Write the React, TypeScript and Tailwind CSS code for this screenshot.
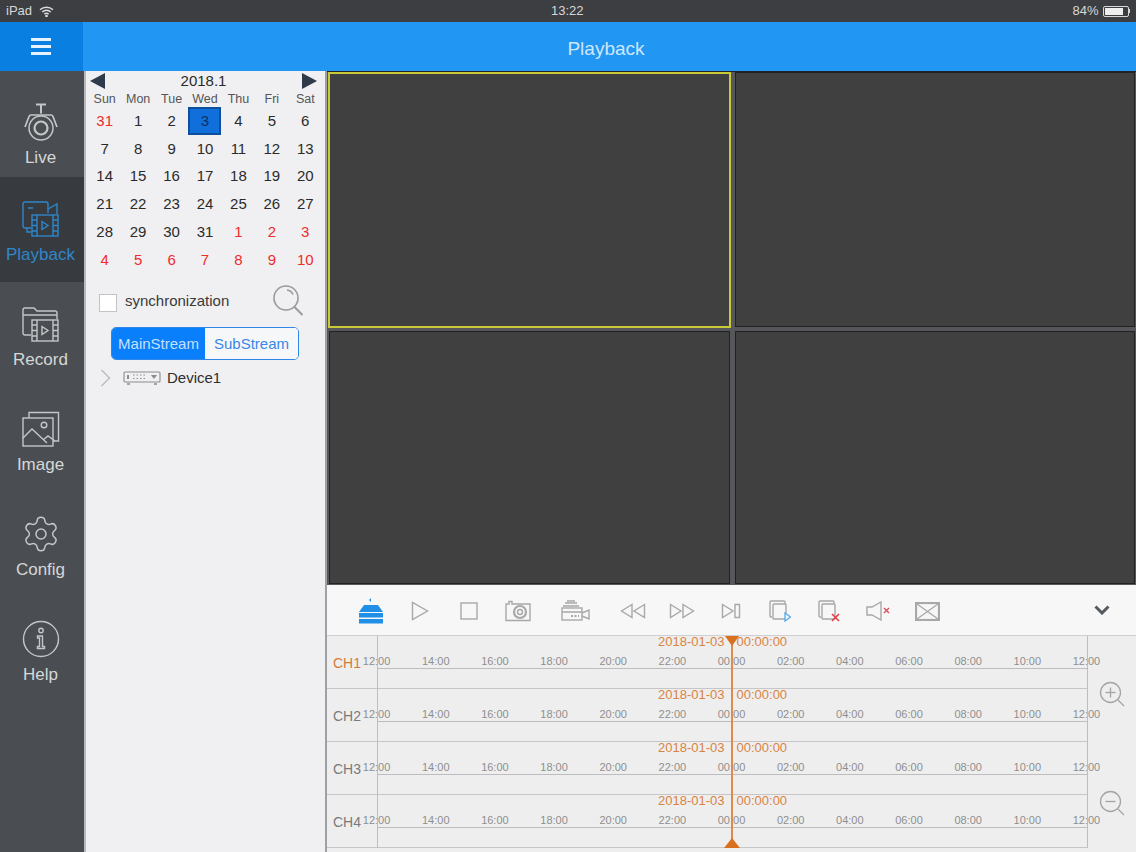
import type { ReactNode } from "react";
import { Settings } from "lucide-react";

const FONT = "font-['Liberation_Sans',Arial,sans-serif]";

// ---- left menu icons ----
function LiveIcon() {
  return (
    <svg width="38" height="38" viewBox="0 0 38 38" fill="none" stroke="#c4c6c8" strokeWidth="1.5">
      <path d="M14 1.500h10M19 1.500v9" strokeWidth="2" />
      <path d="M3 24L7 13.500c.4-1 1.200-1.500 2-1.500h20c.8 0 1.600.5 2 1.500L35 24" strokeWidth="1.700" />
      <circle cx="19" cy="25" r="12" />
      <circle cx="19" cy="25" r="6.500" strokeWidth="2.200" />
    </svg>
  );
}

function PlaybackIcon({ stroke = "#2f86c9", folder = false }: { stroke?: string; folder?: boolean }) {
  return (
    <svg width="38" height="36" viewBox="0 0 38 36" fill="none" stroke={stroke} strokeWidth="1.4">
      {folder ? (
        <path d="M9 29H3a2 2 0 0 1-2-2V4a2 2 0 0 1 2-2h9l3 3h18a2 2 0 0 1 2 2v6M1 9h34" />
      ) : (
        <>
          <path d="M9 27H3a2 2 0 0 1-2-2V3a2 2 0 0 1 2-2h21a2 2 0 0 1 2 2v9" />
          <path d="M26 8l9-5v10" />
          <path d="M6 7h5M5 27v4h4" />
        </>
      )}
      <rect x="10" y="14" width="26" height="21" fill="none" />
      <path d="M15 14v21M31 14v21M10 19h5M10 24.500h5M10 30h5M31 19h5M31 24.500h5M31 30h5" />
      <path d="M20 20.500l6 4-6 4z" />
    </svg>
  );
}

function ImageIcon() {
  return (
    <svg width="38" height="36" viewBox="0 0 38 36" fill="none" stroke="#c4c6c8" strokeWidth="1.4">
      <path d="M7 7V1.500h29.500V30H31" />
      <rect x="1" y="7" width="30" height="28" />
      <circle cx="22" cy="14" r="2.800" />
      <path d="M1 27l9-9 15 14M21 29l5-4 7 5" />
    </svg>
  );
}

function HelpIcon() {
  return (
    <svg width="38" height="38" viewBox="0 0 38 38" fill="none" stroke="#c4c6c8" strokeWidth="1.4">
      <circle cx="19" cy="19" r="17.500" />
      <circle cx="19" cy="10.500" r="2.200" />
      <path d="M15.500 16h5v10.500h2v2h-7v-2h2V18h-2z" />
    </svg>
  );
}

function NavItem({ icon, label, active, first }: { icon: ReactNode; label: string; active?: boolean; first?: boolean }) {
  return (
    <div className={`h-[105px] flex flex-col items-center pr-[3px] ${first ? "pt-[31px]" : "pt-[23px]"} ${active ? "bg-[#373b40]" : ""}`}>
      <div className="h-[38px] flex items-center justify-center">{icon}</div>
      <div className={`text-[17px] leading-[20px] mt-[7px] ${active ? "text-[#2f86c9]" : "text-[#d6d7d8]"}`}>{label}</div>
    </div>
  );
}

// ---- calendar ----
const WEEK = ["Sun", "Mon", "Tue", "Wed", "Thu", "Fri", "Sat"];
const DAYS: { d: number; red?: boolean; sel?: boolean }[] = [
  { d: 31, red: true },
  ...Array.from({ length: 31 }, (_, i) => ({ d: i + 1, sel: i === 2 })),
  ...Array.from({ length: 10 }, (_, i) => ({ d: i + 1, red: true })),
];

function Calendar() {
  return (
    <div className="ml-[2px] w-[234px]">
      <div className="h-[19px] pt-[1px] flex items-center justify-between pl-[2px] pr-[5px]">
        <div className="w-0 h-0 border-y-[8px] border-y-transparent border-r-[15px] border-r-[#2f3a4a]" />
        <div className="text-[15px] leading-[18px] text-[#2b2b2b]">2018.1</div>
        <div className="w-0 h-0 border-y-[8px] border-y-transparent border-l-[15px] border-l-[#2f3a4a]" />
      </div>
      <div className="grid grid-cols-7 h-[17px] items-center">
        {WEEK.map((w) => (
          <div key={w} className="text-center text-[12.5px] leading-[16px] text-[#555]">{w}</div>
        ))}
      </div>
      <div className="grid grid-cols-7 auto-rows-[27.9px]">
        {DAYS.map((c, i) => (
          <div key={i} className="flex items-center justify-center">
            <div
              className={`w-[33px] h-[27.800px] flex items-center justify-center text-[15px] ${
                c.sel
                  ? "bg-[#106fdb] border-2 border-[#0d4f9c] text-[#0b2f63]"
                  : c.red
                    ? "text-[#ee2c2c]"
                    : "text-[#2b2b2b]"
              }`}
            >
              {c.d}
            </div>
          </div>
        ))}
      </div>
    </div>
  );
}

function SearchIcon() {
  return (
    <svg width="32" height="32" viewBox="0 0 32 32" fill="none" stroke="#9a9a9a" strokeWidth="1.6">
      <circle cx="14" cy="13" r="12" />
      <path d="M22.500 22l8 8" strokeWidth="2" />
      <path d="M15 5c3 .3 5 2 6 4.500" />
    </svg>
  );
}

function DeviceIcon() {
  return (
    <svg width="38" height="15" viewBox="0 0 38 15" fill="none" stroke="#8c8c8c" strokeWidth="1.1">
      <rect x="1" y="1" width="36" height="10" rx="1" />
      <path d="M4 13h3M31 13h3" strokeWidth="1.6" />
      <path d="M5 4v4" strokeWidth="2" />
      <path d="M10 4h14M10 7.500h14" strokeDasharray="1.500 2" />
      <path d="M29 4.500h4l-2 2.500z" fill="#8c8c8c" />
    </svg>
  );
}

function SidePanel() {
  return (
    <div className="w-[243px] h-full shrink-0 bg-[#f0f0f2] border-l-2 border-r-2 border-l-[#b9babc] border-r-[#9fa0a2]">
      <Calendar />
      <div className="mt-[11px] h-[32px] flex items-center pl-[13px]">
        <div className="w-[18px] h-[18px] bg-white border border-[#c4c4c4] mt-[3px]" />
        <div className="ml-[8px] text-[15px] text-[#3a3a3a]">synchronization</div>
        <div className="ml-[43px]"><SearchIcon /></div>
      </div>
      <div className="mt-[10px] ml-[25px] w-[188px] h-[33px] flex rounded-[5px] border border-[#2f86e6] overflow-hidden text-[15px]">
        <div className="w-[93px] bg-[#0a7ffb] text-[#c4e0ff] flex items-center justify-center">MainStream</div>
        <div className="flex-1 bg-[#f6f7f9] text-[#3b87e6] flex items-center justify-center">SubStream</div>
      </div>
      <div className="mt-[8px] h-[20px] flex items-center pl-[14px]">
        <svg width="11" height="18" viewBox="0 0 11 18" fill="none" stroke="#bdbdbd" strokeWidth="1.500">
          <path d="M1.500 1l8 8-8 8" />
        </svg>
        <div className="ml-[12px]"><DeviceIcon /></div>
        <div className="ml-[6px] text-[15px] text-[#2f2f2f]">Device1</div>
      </div>
    </div>
  );
}

// ---- toolbar ----
const S = { fill: "none", stroke: "#a8a8a8", strokeWidth: 1.4 };

function CopyShape() {
  return (
    <>
      <path d="M3 17H2a1 1 0 0 1-1-1V2a1 1 0 0 1 1-1h13a1 1 0 0 1 1 1v2" />
      <rect x="4" y="4" width="13" height="15" rx="1" />
    </>
  );
}

const TOOLS: { w: string; icon: ReactNode }[] = [
  {
    w: "w-[49px]",
    icon: (
      <svg width="26" height="28" viewBox="0 0 26 28">
        <path d="M13 1l-2 2 2 2z" fill="#2b8fe6" />
        <path d="M6 8h14l5 7H1z" fill="#1f8fe8" />
        <rect x="1" y="16" width="24" height="4.500" fill="#1f8fe8" />
        <rect x="1" y="22" width="24" height="4.500" fill="#1f8fe8" />
      </svg>
    ),
  },
  { w: "w-[49px]", icon: <svg width="18" height="20" viewBox="0 0 18 20" {...S}><path d="M1.500 1.500v17l15-8.500z" /></svg> },
  { w: "w-[49px]", icon: <svg width="18" height="18" viewBox="0 0 18 18" {...S}><rect x="1" y="1" width="16" height="16" /></svg> },
  {
    w: "w-[49px]",
    icon: (
      <svg width="26" height="24" viewBox="0 0 26 24" {...S}>
        <path d="M1 21V5h3V2.500h3V5h18v16.500H1z" />
        <circle cx="15" cy="13" r="6" strokeWidth="2.200" />
        <circle cx="15" cy="13" r="2.500" />
      </svg>
    ),
  },
  {
    w: "w-[66px]",
    icon: (
      <svg width="29" height="22" viewBox="0 0 29 22" {...S}>
        <path d="M2 6h16M4 3h12M6 1h8" />
        <rect x="1" y="8" width="20" height="12" />
        <path d="M1 12h20M21 13l7-3v9l-7-3" />
        <path d="M10 16h8" strokeDasharray="2 1.500" strokeWidth="2" />
      </svg>
    ),
  },
  { w: "w-[49px]", icon: <svg width="26" height="16" viewBox="0 0 26 16" {...S}><path d="M12 1.500L1.500 8 12 14.500zM24.500 1.500L14 8l10.500 6.500z" /></svg> },
  { w: "w-[49px]", icon: <svg width="26" height="16" viewBox="0 0 26 16" {...S}><path d="M1.500 1.500L12 8 1.500 14.500zM14 1.500L24.500 8 14 14.500z" /></svg> },
  { w: "w-[49px]", icon: <svg width="20" height="16" viewBox="0 0 20 16" {...S}><path d="M1.500 1.500L12 8 1.500 14.500zM14 1.500h4.500v13H14z" /></svg> },
  {
    w: "w-[49px]",
    icon: (
      <svg width="22" height="22" viewBox="0 0 22 22" {...S}>
        <CopyShape />
        <path d="M16 13v8l5.500-4z" stroke="#5aaee8" fill="#f7f7f8" />
      </svg>
    ),
  },
  {
    w: "w-[49px]",
    icon: (
      <svg width="22" height="22" viewBox="0 0 22 22" {...S}>
        <CopyShape />
        <path d="M14 14l7 7M21 14l-7 7" stroke="#e0404a" strokeWidth="1.600" />
      </svg>
    ),
  },
  {
    w: "w-[49px]",
    icon: (
      <svg width="25" height="20" viewBox="0 0 25 20" {...S}>
        <path d="M1 6h5l9-5v18l-9-5H1z" />
        <path d="M18 7l5 5M23 7l-5 5" stroke="#d8505a" />
      </svg>
    ),
  },
  {
    w: "w-[49px]",
    icon: (
      <svg width="25" height="19" viewBox="0 0 25 19" fill="none" stroke="#a8a8a8" strokeWidth={2.2}>
        <rect x="1" y="1" width="23" height="17" />
        <path d="M2 2l21 15M23 2L2 17" strokeWidth="1.300" />
      </svg>
    ),
  },
];

function Toolbar() {
  return (
    <div className="h-[50px] bg-[#f7f7f8] flex items-center pl-[19.500px] pt-[2px] pr-[26px]">
      {TOOLS.map((t, i) => (
        <div key={i} className={`${t.w} flex items-center justify-center`}>{t.icon}</div>
      ))}
      <svg className="ml-auto mb-[2px]" width="16" height="10" viewBox="0 0 16 10" fill="none" stroke="#555a60" strokeWidth="3">
        <path d="M1.500 1.500L8 8l6.500-6.500" />
      </svg>
    </div>
  );
}

// ---- timeline ----
const HOURS = ["12:00", "14:00", "16:00", "18:00", "20:00", "22:00", "00:00", "02:00", "04:00", "06:00", "08:00", "10:00", "12:00"];
const CHANNELS = ["CH1", "CH2", "CH3", "CH4"];

function ChannelRow({ name, active }: { name: string; active?: boolean }) {
  return (
    <div className="h-[53px] flex border-b border-[#c6c6c8]">
      <div className={`w-[50px] pl-[6px] pt-[18px] text-[14px] leading-[18px] ${active ? "text-[#d67a3c]" : "text-[#7a7a7a]"}`}>
        {name}
      </div>
      <div className="flex-1 -ml-[30px] min-w-0">
        <div className="h-[13px] pl-[311px] flex text-[13px] leading-[12px] text-[#d9843f]">
          <span>2018-01-03</span>
          <span className="ml-[12px]">00:00:00</span>
        </div>
        <div className="mt-[6px] h-[13px] flex text-[11px] leading-[13px] text-[#8e8e8e] whitespace-nowrap">
          {HOURS.map((h, i) => (
            <div key={i} className="w-[59.170px] shrink-0 text-center">{h}</div>
          ))}
        </div>
        <div className="ml-[30px] h-px bg-[#bdbdbf]" />
      </div>
    </div>
  );
}

function ZoomIcon({ plus }: { plus?: boolean }) {
  return (
    <svg width="26" height="26" viewBox="0 0 26 26" fill="none" stroke="#a4a4a4" strokeWidth="1.300">
      <circle cx="11.500" cy="11.500" r="10" />
      <path d="M19 19l6 6" />
      <path d="M6.500 11.500h10" />
      {plus && <path d="M11.500 6.500v10" />}
    </svg>
  );
}

function Timeline() {
  return (
    <div className="relative flex-1 flex bg-[#eeeeef] border-t border-[#cfcfd1] overflow-hidden">
      <div className="w-[760px] shrink-0">
        {CHANNELS.map((c, i) => (
          <ChannelRow key={c} name={c} active={i === 0} />
        ))}
      </div>
      <div className="flex-1 flex flex-col items-center pl-[1px]">
        <div className="mt-[45px]"><ZoomIcon plus /></div>
        <div className="mt-[83px]"><ZoomIcon /></div>
      </div>
      {/* axis lines and play head lie over the rows */}
      <div className="absolute left-[50px] top-0 h-[212px] w-px bg-[#bdbdbf]" />
      <div className="absolute left-[760px] top-0 h-[212px] w-px bg-[#bdbdbf]" />
      <div className="absolute left-[404px] top-0 h-[210px] w-[2px] bg-[#e08b4c]" />
      <div className="absolute left-[398px] top-0 w-0 h-0 border-x-[7px] border-x-transparent border-t-[10px] border-t-[#d9701f]" />
      <div className="absolute left-[397px] top-[202px] w-0 h-0 border-x-[8px] border-x-transparent border-b-[10px] border-b-[#d9701f]" />
    </div>
  );
}

export default function App() {
  return (
    <div className={`w-[1136px] h-[852px] overflow-hidden flex flex-col bg-[#eee] ${FONT}`}>
      {/* status bar */}
      <div className="h-[22px] shrink-0 bg-[#3d3e41] flex items-center justify-between pl-[6px] pr-[6px] text-[13px] text-[#d8d8d8] relative">
        <div className="flex items-center gap-[7px]">
          <span>iPad</span>
          <svg width="15" height="11" viewBox="0 0 15 11" fill="none" stroke="#dcdcdc" strokeWidth="1.500">
            <path d="M1 3.800c3.800-3.400 9.200-3.400 13 0M3.200 6c2.500-2.200 6.100-2.200 8.600 0M5.400 8.200c1.200-1 3-1 4.200 0" />
            <circle cx="7.500" cy="10" r=".6" fill="#dcdcdc" />
          </svg>
        </div>
        <span className="absolute left-[551px]">13:22</span>
        <div className="flex items-center gap-[4px]">
          <span>84%</span>
          <div className="flex items-center">
            <div className="w-[26px] h-[11px] border border-[#d8d8d8] rounded-[2px] p-[1px]">
              <div className="w-[84%] h-full bg-[#eee]" />
            </div>
            <div className="w-[1.500px] h-[4px] bg-[#d8d8d8]" />
          </div>
        </div>
      </div>

      {/* top bar */}
      <div className="h-[49px] shrink-0 flex bg-[#2196f3]">
        <div className="w-[83px] bg-[#0a7fe2] flex items-center justify-center pr-[2px]">
          <div className="w-[20px] flex flex-col gap-[4.500px]">
            <div className="h-[2.500px] bg-[#e6f2fc]" />
            <div className="h-[2.500px] bg-[#e6f2fc]" />
            <div className="h-[2.500px] bg-[#e6f2fc]" />
          </div>
        </div>
        <div className="flex-1 flex items-center justify-center pr-[7px] pt-[6px] text-[19px] text-[#cfe7fb]">Playback</div>
      </div>

      <div className="flex-1 flex min-h-0">
        {/* menu */}
        <div className="w-[84px] shrink-0 bg-[#4a4e52] pt-px">
          <NavItem icon={<LiveIcon />} label="Live" first />
          <NavItem icon={<PlaybackIcon />} label="Playback" active />
          <NavItem icon={<PlaybackIcon stroke="#c4c6c8" folder />} label="Record" />
          <NavItem icon={<ImageIcon />} label="Image" />
          <NavItem icon={<Settings size={40} strokeWidth={0.9} color="#c4c6c8" />} label="Config" />
          <NavItem icon={<HelpIcon />} label="Help" />
        </div>

        <SidePanel />

        <div className="flex-1 flex flex-col min-w-0">
          {/* video wall */}
          <div className="h-[514px] shrink-0 bg-[#55575a] border-t border-[#222224] pl-px grid grid-cols-[403px_400px] grid-rows-[256px_253px] gap-x-[4px] gap-y-[3px]">
            <div className="bg-[#404040] border-2 border-[#c9c93a]" />
            <div className="bg-[#404040] border border-[#222224] mb-[1px]" />
            <div className="bg-[#404040] border border-[#222224] ml-px mr-px" />
            <div className="bg-[#404040] border border-[#222224]" />
          </div>
          <Toolbar />
          <Timeline />
        </div>
      </div>
    </div>
  );
}
